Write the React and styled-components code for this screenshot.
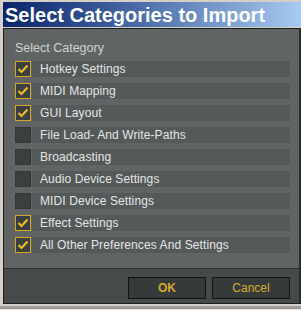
import React from "react";
import styled, { createGlobalStyle } from "styled-components";

const Global = createGlobalStyle`
  html, body { margin: 0; padding: 0; }
  body {
    background: #d4d0c8;
    width: 301px;
    height: 310px;
    overflow: hidden;
    font-family: "Liberation Sans", Arial, sans-serif;
  }
`;

const Frame = styled.div`
  width: 301px;
  height: 310px;
  box-sizing: border-box;
  padding: 2px 0 0 3px;
  display: flex;
  flex-direction: column;
`;

const TitleBar = styled.div`
  height: 25px;
  flex: none;
  background: linear-gradient(to right, #0a246a 0%, #3a5a9a 35%, #a6caf0 100%);
  color: #ffffff;
  font-size: 20px;
  font-weight: bold;
  line-height: 25px;
  padding: 1px 0 0 2px;
  box-sizing: border-box;
  white-space: nowrap;
  overflow: hidden;
`;

const Panel = styled.div`
  margin-top: 1px;
  width: 298px;
  height: 276px;
  box-sizing: border-box;
  border: 1px solid #1c1e1e;
  border-right: 2px solid #2a2c2c;
  background: #606464;
  display: flex;
  flex-direction: column;
  flex: none;
`;

const Body = styled.div`
  flex: 1;
  padding: 11px 9px 0 11px;
  display: flex;
  flex-direction: column;
`;

const Heading = styled.div`
  color: #cfd2d2;
  font-size: 12.5px;
  line-height: 16px;
  margin-bottom: 5px;
`;

const List = styled.div`
  display: flex;
  flex-direction: column;
  gap: 6px;
`;

const Row = styled.div`
  display: flex;
  align-items: center;
  height: 16px;
`;

const Box = styled.div`
  width: 16px;
  height: 16px;
  box-sizing: border-box;
  flex: none;
  background: #3b3f3f;
  border: 1px solid ${(p) => (p.$checked ? "#d4a62a" : "#343838")};
  display: flex;
  align-items: center;
  justify-content: center;
  margin-right: 1px;
`;

const Band = styled.div`
  flex: 1;
  height: 16px;
  background: #555959;
  color: #e4e6e6;
  font-size: 12px;
  letter-spacing: 0.1px;
  line-height: 17px;
  padding-left: 8px;
  white-space: nowrap;
`;

const Footer = styled.div`
  height: 35px;
  box-sizing: border-box;
  border-top: 1px solid #2a2e2e;
  background: #464a4a;
  display: flex;
  justify-content: flex-end;
  gap: 6px;
  padding: 8px 9px 0 0;
`;

const Button = styled.div`
  width: 78px;
  height: 22px;
  box-sizing: border-box;
  border: 1px solid #121414;
  background: #363a3a;
  color: #d6ab2c;
  font-size: 12px;
  font-weight: ${(p) => (p.$bold ? "bold" : "normal")};
  display: flex;
  align-items: center;
  justify-content: center;
`;

const BottomEdge = styled.div`
  margin-left: -3px;
  height: 6px;
  box-sizing: border-box;
  border-top: 2px solid #d4d0c8;
  border-bottom: 1px solid #e4e2dc;
  background: #9c9a94;
  flex: none;
`;

const Check = () => (
  <svg width="12" height="10" viewBox="0 0 12 10">
    <path d="M1.5 5 L4.5 8 L10.5 1.5" fill="none" stroke="#f0c020" strokeWidth="2" />
  </svg>
);

const items = [
  ["Hotkey Settings", true],
  ["MIDI Mapping", true],
  ["GUI Layout", true],
  ["File Load- And Write-Paths", false],
  ["Broadcasting", false],
  ["Audio Device Settings", false],
  ["MIDI Device Settings", false],
  ["Effect Settings", true],
  ["All Other Preferences And Settings", true],
];

export default function App() {
  return (
    <>
      <Global />
      <Frame>
        <TitleBar>Select Categories to Import</TitleBar>
        <Panel>
          <Body>
            <Heading>Select Category</Heading>
            <List>
              {items.map(([label, checked]) => (
                <Row key={label}>
                  <Box $checked={checked}>{checked && <Check />}</Box>
                  <Band>{label}</Band>
                </Row>
              ))}
            </List>
          </Body>
          <Footer>
            <Button $bold>OK</Button>
            <Button>Cancel</Button>
          </Footer>
        </Panel>
        <BottomEdge />
      </Frame>
    </>
  );
}
